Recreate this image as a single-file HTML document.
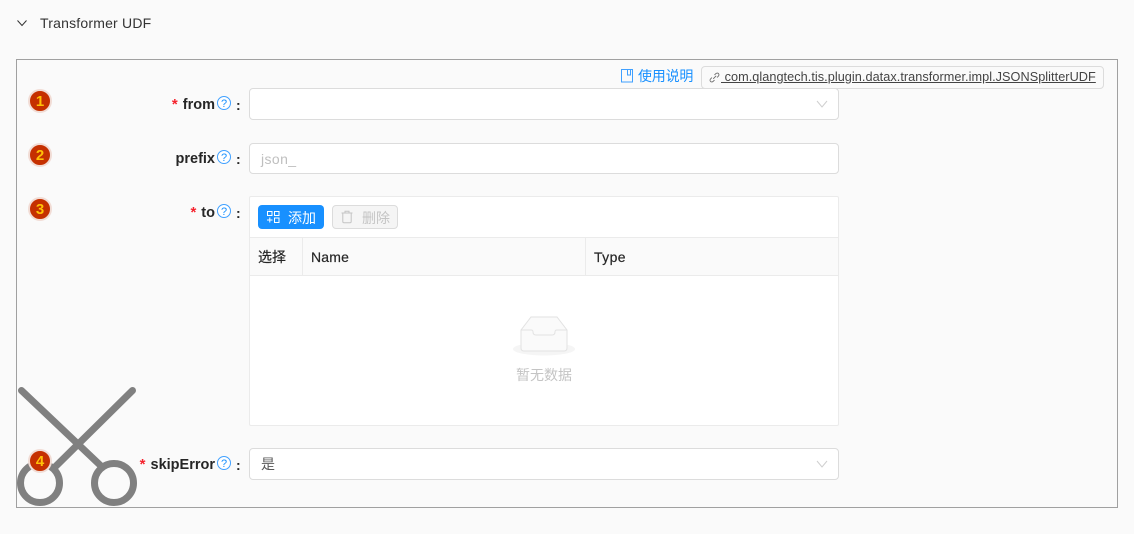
<!DOCTYPE html>
<html>
<head>
<meta charset="utf-8">
<style>
*{box-sizing:border-box}
html,body{margin:0;padding:0}
body{width:1134px;height:534px;background:#fafafa;position:relative;overflow:hidden;font-family:"Liberation Sans","Noto Sans CJK SC",sans-serif;font-size:14px;color:rgba(0,0,0,.85)}
.a{position:absolute;white-space:nowrap}
.panel{position:absolute;left:16px;top:59px;width:1102px;height:449px;border:1px solid #a0a0a0}
.box{position:absolute;left:249px;width:590px;background:#fff;border:1px solid #dcdcdc;border-radius:4px}
.lab{position:absolute;font-weight:bold;font-size:14.500px;line-height:20px;color:#262626;text-align:right;white-space:nowrap}
.star{color:#f5222d;font-weight:bold;font-size:15px;margin-right:1px;font-family:"Liberation Sans",sans-serif}
.badge{position:absolute;left:28px;width:24px;height:24px;border-radius:50%;background:#c53000;border:2px solid #f1dcd5;color:#ffc107;font-weight:bold;font-size:15px;line-height:21px;text-align:center}
.colon{position:absolute;left:236px;font-weight:bold;font-size:14px;line-height:20px;color:#262626}
.th{-webkit-text-stroke:.2px #262626;color:#262626;line-height:18px;font-size:14px;letter-spacing:.2px}
svg{position:absolute;overflow:visible}
</style>
</head>
<body>
<svg style="left:16px;top:17px" width="12" height="12" viewBox="0 0 12 12"><path d="M1.500 3.500L6 8.500L10.500 3.500" fill="none" stroke="#333" stroke-width="1"/></svg>
<div class="a" style="left:40px;top:14px;line-height:18px;font-size:14px;letter-spacing:.2px;color:#333">Transformer UDF</div>

<div class="panel"></div>

<svg style="left:620px;top:68px" width="14" height="15" viewBox="0 0 14 15"><path d="M1.500 1.500H12.500V14H1.500Z M7.500 1.500V7H10.500V1.500" fill="none" stroke="#40a0ff" stroke-width="1"/></svg>
<div class="a" style="left:638px;top:67px;line-height:18px;font-size:14px;letter-spacing:-.2px;color:#1890ff">使用说明</div>
<div class="a" style="left:701px;top:66px;width:403px;height:23px;border:1px solid #dcdcdc;border-radius:4px;background:#fafafa"></div>
<svg style="left:709px;top:72px" width="11" height="11" viewBox="0 0 13 13"><path d="M5 8L8.500 4.500 M6.500 3.500L8 2C9 1 10.500 1 11.200 1.800C12 2.600 12 4 11 5L9.500 6.500 M6.500 9.500L5 11C4 12 2.500 12 1.800 11.200C1 10.400 1 9 2 8L3.500 6.500" fill="none" stroke="#666" stroke-width="1"/></svg>
<div class="a" style="left:721px;top:69px;line-height:16px;font-size:12.700px;letter-spacing:.05px;color:#444;text-decoration:underline">&nbsp;com.qlangtech.tis.plugin.datax.transformer.impl.JSONSplitterUDF</div>

<div class="badge" style="top:89px">1</div>
<div class="badge" style="top:143px">2</div>
<div class="badge" style="top:197px">3</div>

<div class="lab" style="left:100px;width:115px;top:95px"><span class="star">*</span> from</div>
<div class="lab" style="left:100px;width:115px;top:149px">prefix</div>
<div class="lab" style="left:100px;width:115px;top:203px"><span class="star">*</span> to</div>
<div class="lab" style="left:100px;width:115px;top:455px"><span class="star">*</span> skipError</div>

<div class="colon" style="top:95px">:</div>
<div class="colon" style="top:149px">:</div>
<div class="colon" style="top:203px">:</div>
<div class="colon" style="top:455px">:</div>

<svg style="left:217px;top:96px" width="14" height="14" viewBox="0 0 14 14"><circle cx="7" cy="7" r="6.500" fill="#fff" stroke="#40a0ff" stroke-width="1"/><text x="7" y="10.800" font-size="11" text-anchor="middle" fill="#1890ff" font-family="Liberation Sans">?</text></svg>
<svg style="left:217px;top:150px" width="14" height="14" viewBox="0 0 14 14"><circle cx="7" cy="7" r="6.500" fill="#fff" stroke="#40a0ff" stroke-width="1"/><text x="7" y="10.800" font-size="11" text-anchor="middle" fill="#1890ff" font-family="Liberation Sans">?</text></svg>
<svg style="left:217px;top:204px" width="14" height="14" viewBox="0 0 14 14"><circle cx="7" cy="7" r="6.500" fill="#fff" stroke="#40a0ff" stroke-width="1"/><text x="7" y="10.800" font-size="11" text-anchor="middle" fill="#1890ff" font-family="Liberation Sans">?</text></svg>
<svg style="left:217px;top:456px" width="14" height="14" viewBox="0 0 14 14"><circle cx="7" cy="7" r="6.500" fill="#fff" stroke="#40a0ff" stroke-width="1"/><text x="7" y="10.800" font-size="11" text-anchor="middle" fill="#1890ff" font-family="Liberation Sans">?</text></svg>

<div class="box" style="top:88px;height:32px"></div>
<svg style="left:816px;top:99px" width="12" height="10" viewBox="0 0 12 10"><path d="M1 2L6 8L11 2" fill="none" stroke="#cfcfcf" stroke-width="1"/></svg>

<div class="box" style="top:143px;height:31px"></div>
<div class="a" style="left:261px;top:150px;line-height:18px;color:#bfbfbf;font-size:14px;letter-spacing:.4px">json_</div>

<div class="a" style="left:249px;top:196px;width:590px;height:230px;background:#fff;border:1px solid #ebebeb;border-radius:2px"></div>
<div class="a" style="left:258px;top:205px;width:66px;height:24px;background:#1890ff;border-radius:4px"></div>
<svg style="left:266px;top:210px" width="14" height="14" viewBox="0 0 14 14"><path d="M1.500 1.500H6V5.500H1.500Z M8.500 1.500H13V5.500H8.500Z M8.500 8H13V12.500H8.500Z M1 10H6.500 M3.800 7.500V12.500" fill="none" stroke="#fff" stroke-width="1"/></svg>
<div class="a" style="left:288px;top:209px;line-height:18px;color:#fff;font-size:14px">添加</div>
<div class="a" style="left:332px;top:205px;width:66px;height:24px;background:#f5f5f5;border:1px solid #dcdcdc;border-radius:4px"></div>
<svg style="left:340px;top:210px" width="14" height="14" viewBox="0 0 14 14"><path d="M1.500 3H12.500 M5 3V1.200H9V3 M2.800 3V11.500Q2.800 12.800 4 12.800H10Q11.200 12.800 11.200 11.500V3" fill="none" stroke="#c4c4c4" stroke-width="1"/></svg>
<div class="a" style="left:362px;top:209px;line-height:18px;color:#c4c4c4;font-size:14px">删除</div>

<div class="a" style="left:250px;top:237px;width:588px;height:39px;background:#fafafa;border-top:1px solid #ebebeb;border-bottom:1px solid #ebebeb"></div>
<div class="a" style="left:302px;top:238px;width:1px;height:37px;background:#ebebeb"></div>
<div class="a" style="left:585px;top:238px;width:1px;height:37px;background:#ebebeb"></div>
<div class="a th" style="left:258px;top:248px;letter-spacing:0">选择</div>
<div class="a th" style="left:311px;top:248px">Name</div>
<div class="a th" style="left:594px;top:248px;letter-spacing:.4px">Type</div>

<svg style="left:512px;top:315px" width="64" height="41" viewBox="0 0 64 41">
<ellipse cx="32" cy="34" rx="31" ry="6.500" fill="#f5f5f5"/>
<path d="M9 15L19 2H45L55 15V33C55 35 54 36 52 36H12C10 36 9 35 9 33Z" fill="#fafafa" stroke="#e2e2e2" stroke-width="1"/>
<path d="M9 15H19C21 15 21 16 21 17C21 19 22 20 24 20H40C42 20 43 19 43 17C43 16 43 15 45 15H55" fill="none" stroke="#e2e2e2" stroke-width="1"/>
</svg>
<div class="a" style="left:516px;top:366px;line-height:18px;font-size:14px;color:#c4c4c4">暂无数据</div>

<div class="box" style="top:448px;height:32px"></div>
<div class="a" style="left:261px;top:455px;line-height:18px;font-size:14px;color:#595959">是</div>
<svg style="left:816px;top:459px" width="12" height="10" viewBox="0 0 12 10"><path d="M1 2L6 8L11 2" fill="none" stroke="#cfcfcf" stroke-width="1"/></svg>

<svg style="left:0;top:0" width="1134" height="534">
<g fill="none" stroke="#808080" stroke-width="7" stroke-linecap="round">
<path d="M21.500 390.500L100 465"/>
<path d="M132.500 390.500L54 468"/>
<circle cx="40" cy="483" r="19.500"/>
<circle cx="114" cy="483" r="19.500"/>
</g>
</svg>
<div class="badge" style="top:449px">4</div>
</body>
</html>
